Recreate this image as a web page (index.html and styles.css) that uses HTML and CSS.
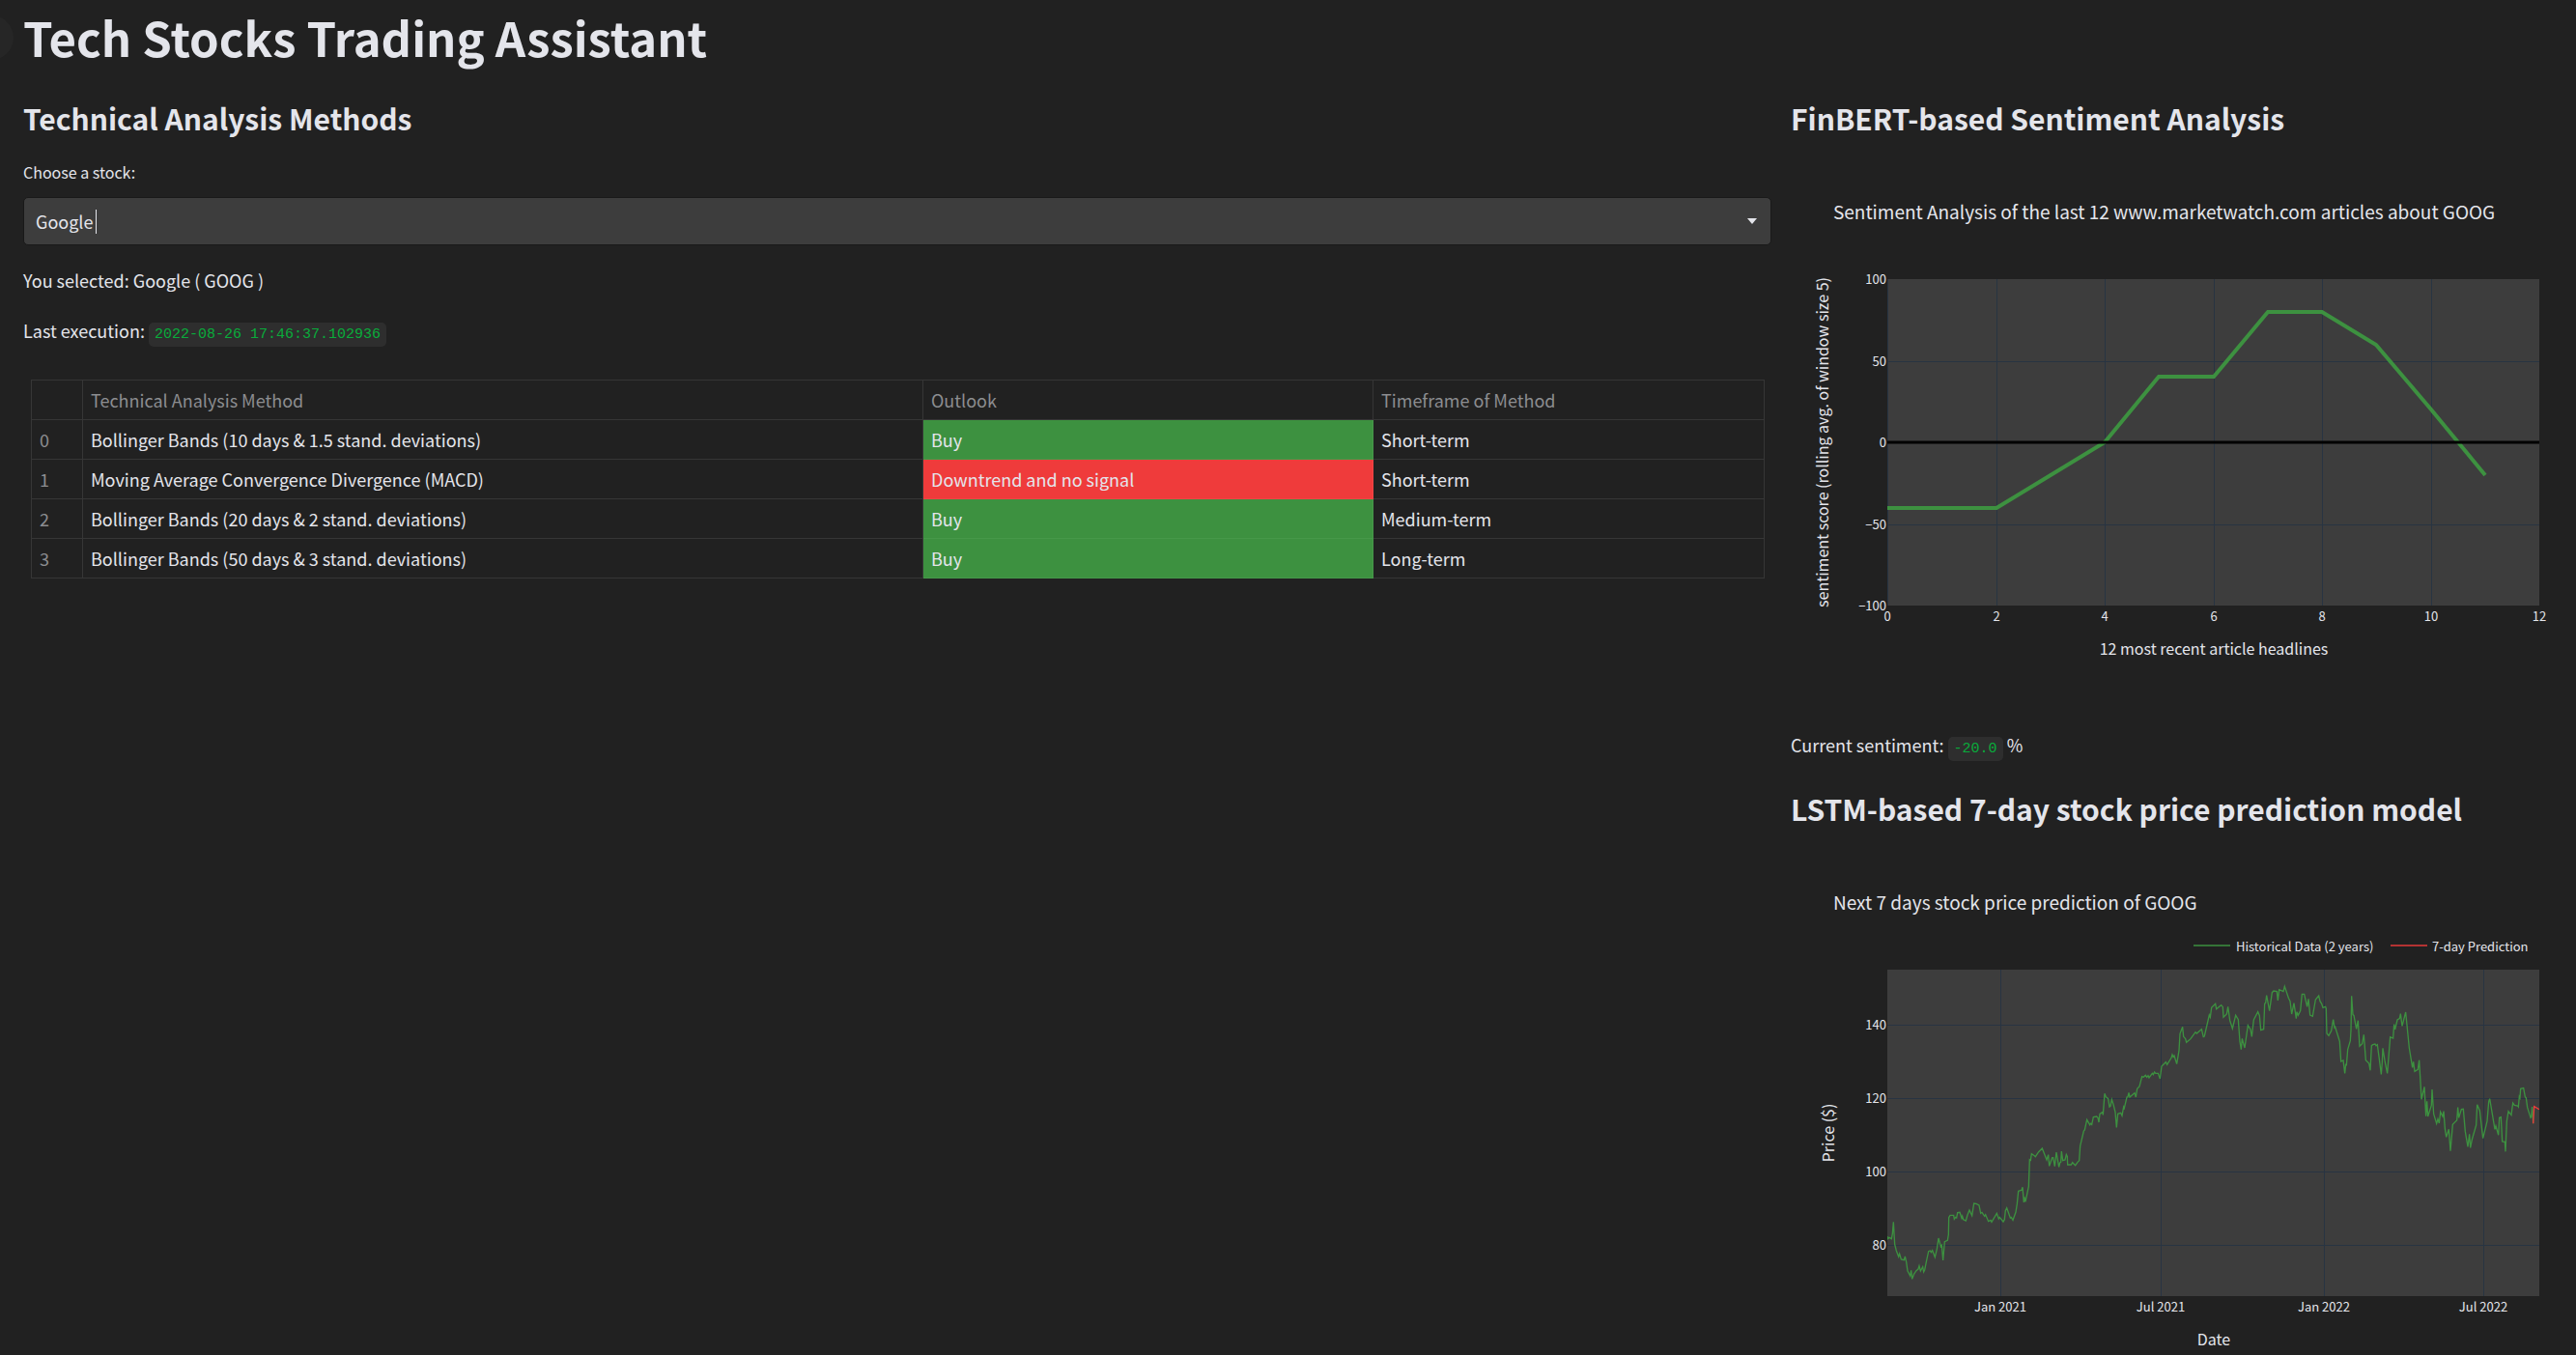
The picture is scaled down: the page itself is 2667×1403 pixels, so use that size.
FILE: index.html
```html
<!DOCTYPE html>
<html lang="en">
<head>
<meta charset="utf-8">
<meta name="viewport" content="width=device-width, initial-scale=1">
<title>Tech Stocks Trading Assistant</title>
<link rel="stylesheet" href="styles.css">
</head>
<body>
<button class="edge-handle" type="button" aria-label="Open sidebar"></button>
<main class="page">
  <h1>Tech Stocks Trading Assistant</h1>
  <div class="columns">
    <section class="methods">
      <h2>Technical Analysis Methods</h2>
      <label class="field-label" for="stock">Choose a stock:</label>
      <div class="select-wrap">
        <select id="stock" class="select">
          <option selected>Google</option>
          <option>Apple</option>
          <option>Microsoft</option>
          <option>Amazon</option>
        </select>
        <span class="caret"></span>
        <svg class="chevron" viewBox="0 0 10 6" aria-hidden="true"><path d="M0 0h10L5 6z"/></svg>
      </div>
      <p class="line">You selected: Google ( GOOG )</p>
      <p class="line">Last execution: <code>2022-08-26 17:46:37.102936</code></p>
      <table class="signals">
        <colgroup><col class="c-index"><col class="c-method"><col class="c-outlook"><col class="c-time"></colgroup>
        <thead>
          <tr><th></th><th>Technical Analysis Method</th><th>Outlook</th><th>Timeframe of Method</th></tr>
        </thead>
        <tbody>
          <tr><th>0</th><td>Bollinger Bands (10 days &amp; 1.5 stand. deviations)</td><td class="up">Buy</td><td>Short-term</td></tr>
          <tr><th>1</th><td>Moving Average Convergence Divergence (MACD)</td><td class="down">Downtrend and no signal</td><td>Short-term</td></tr>
          <tr><th>2</th><td>Bollinger Bands (20 days &amp; 2 stand. deviations)</td><td class="up">Buy</td><td>Medium-term</td></tr>
          <tr><th>3</th><td>Bollinger Bands (50 days &amp; 3 stand. deviations)</td><td class="up">Buy</td><td>Long-term</td></tr>
        </tbody>
      </table>
    </section>
    <section class="models">
      <h2>FinBERT-based Sentiment Analysis</h2>
      <svg class="chart" viewBox="0 0 789 563" role="img" aria-label="Sentiment score of the last 12 articles">
        <text class="chart-title" x="44" y="65">Sentiment Analysis of the last 12 www.marketwatch.com articles about GOOG</text>
        <rect class="plot" x="100" y="127" width="675" height="338"/>
        <path class="grid" d="M100 127v338M213 127v338M325 127v338M438 127v338M550 127v338M663 127v338M100 212h675M100 381h675"/>
        <polyline class="score" points="100,364 213,364 269,330 325,296 381,228 438,228 494,161 550,161 606,195 663,262 719,330"/>
        <path class="zero" d="M100 296h675"/>
        <g class="tick end"><text x="99" y="132">100</text><text x="99" y="217">50</text><text x="99" y="301">0</text><text x="99" y="386">−50</text><text x="99" y="470">−100</text></g>
        <g class="tick mid"><text x="100" y="481">0</text><text x="213" y="481">2</text><text x="325" y="481">4</text><text x="438" y="481">6</text><text x="550" y="481">8</text><text x="663" y="481">10</text><text x="775" y="481">12</text></g>
        <text class="axis mid" x="438" y="516">12 most recent article headlines</text>
        <text class="axis mid" transform="translate(39 296) rotate(-90)">sentiment score (rolling avg. of window size 5)</text>
      </svg>
      <p class="line sentiment">Current sentiment: <code>-20.0</code> %</p>
      <h2>LSTM-based 7-day stock price prediction model</h2>
      <svg class="chart" viewBox="0 0 789 526" role="img" aria-label="Stock price history and prediction">
        <text class="chart-title" x="44" y="65">Next 7 days stock price prediction of GOOG</text>
        <path class="key-past" d="M417 102h38"/><text class="tick" x="461" y="108">Historical Data (2 years)</text>
        <path class="key-next" d="M621 102h38"/><text class="tick" x="664" y="108">7-day Prediction</text>
        <rect class="plot" x="100" y="127" width="675" height="338"/>
        <path class="grid" d="M217 127v338M383 127v338M552 127v338M717 127v338M100 184h675M100 260h675M100 336h675M100 412h675"/>
        <svg x="100" y="127" width="675" height="337" viewBox="42 42 2025 1011">
          <polyline class="past" points="42,870 44,878 48,874 55,878 58,862 61,826 65,895 70,915 77,934 80,925 85,942 94,944 97,933 101,950 105,978 113,993 116,976 119,1003 125,987 132,977 138,972 141,962 145,978 152,965 155,981 158,975 163,950 170,917 175,915 178,920 182,914 190,935 196,910 201,876 208,902 211,898 215,945 220,887 229,883 232,865 233,812 237,805 248,805 250,817 254,811 257,813 260,797 267,796 273,814 275,808 278,818 286,822 291,804 297,789 305,806 311,768 318,769 327,774 332,799 336,796 344,808 347,803 356,824 363,820 366,826 382,799 388,816 391,811 402,825 406,818 409,790 413,782 424,813 427,811 432,820 441,795 445,770 449,730 459,727 462,718 466,765 468,748 471,763 481,715 484,632 487,634 490,614 499,620 502,623 512,608 523,597 537,633 542,617 545,652 554,626 557,626 562,653 567,609 575,655 578,642 581,640 583,606 587,635 594,633 598,616 601,622 602,648 613,648 617,641 626,650 633,640 638,635 641,590 652,543 655,540 662,508 671,524 674,520 677,523 682,500 692,498 696,502 699,516 702,490 710,485 712,493 717,427 721,437 728,443 732,468 735,466 739,445 744,460 750,485 754,532 758,490 767,487 771,496 776,468 778,472 786,438 789,437 792,424 795,438 810,425 814,438 818,412 825,405 833,374 838,376 844,370 848,376 852,371 855,378 865,364 868,368 872,360 875,364 883,364 889,381 894,342 907,329 911,337 924,316 927,306 930,313 933,309 941,335 948,293 951,241 959,220 962,250 968,257 971,268 984,257 999,236 1003,240 1018,227 1024,252"/>
          <g transform="translate(1020 0)">
            <polyline class="past" points="4,252 7,248 22,183 25,190 29,160 39,150 41,148 44,164 59,152 64,158 66,190 76,180 80,157 86,200 94,225 104,184 112,197 117,265 121,290 124,256 132,285 142,215 150,228 154,250 160,198 173,173 178,185 182,230 191,227 194,148 197,145 200,122 209,170 217,113 222,108 232,110 235,138 239,104 252,110 256,94 268,130 273,140 278,180 285,146 292,194 294,173 298,184 305,170 310,118 317,118 326,157 330,133 335,183 343,187 352,135 362,123 366,140 371,148 375,160 383,157 385,163 387,240 393,247 401,232 407,197 411,222 413,220 427,265 431,327 438,324 443,364 446,335 448,340 452,290 460,263 462,230 464,124 468,182 471,184 479,226 484,200 489,280 497,272 502,244 508,323 518,333 522,355 526,278 530,275 537,273 540,278 544,275 550,320 556,367 559,330 561,286 568,330 575,364 584,251 593,255 596,212 599,228 606,198 613,194 616,179 621,217 632,174 643,285 653,346 656,328 660,358 670,352 674,323 681,445 690,406 695,497 698,451 701,498 712,463 714,414 719,490 728,520 732,506 736,519 740,484 747,498 750,482 754,535 758,562 766,538 771,605 778,523 791,510 794,470 797,502 805,476 811,475 817,545 825,592 830,553 833,595 838,570 851,525 854,461 862,480 872,566 885,513 890,452 893,443 901,490 909,538 912,527 920,556 923,502 928,500 932,576 940,577 942,607 946,513 951,482 960,494 965,456 970,463 980,465 982,468 985,436 987,440 989,412 998,410 1003,437 1006,440 1010,470 1020,502 1022,500 1025,468 1028,520"/>
            <polyline class="next" points="1028,520 1031,467 1047,476"/>
          </g>
        </svg>
        <g class="tick end"><text x="99" y="189">140</text><text x="99" y="265">120</text><text x="99" y="341">100</text><text x="99" y="417">80</text></g>
        <g class="tick mid"><text x="217" y="481">Jan 2021</text><text x="383" y="481">Jul 2021</text><text x="552" y="481">Jan 2022</text><text x="717" y="481">Jul 2022</text></g>
        <text class="axis mid" x="438" y="516">Date</text>
        <text class="axis mid" transform="translate(45 296) rotate(-90)">Price ($)</text>
      </svg>
    </section>
  </div>
</main>
</body>
</html>
```
FILE: styles.css
```css
* { box-sizing: border-box; }
body {
  margin: 0;
  background: #212121;
  color: #e4e5eb;
  font-family: "Noto Sans CJK SC", "Noto Sans", sans-serif;
  font-size: 18px;
  line-height: 32px;
}
.page { padding: 0 24px; }
h1, h2, p { margin: 0; }
h1 { font-size: 49px; font-weight: 700; line-height: 66px; padding-top: 5px; }
h2 { font-size: 30px; font-weight: 600; line-height: 42px; }
.edge-handle {
  position: absolute;
  left: -32px;
  top: 16px;
  width: 46px;
  height: 46px;
  padding: 0;
  border: 0;
  border-radius: 50%;
  background: #262626;
}
.columns {
  display: grid;
  grid-template-columns: minmax(0, 1810fr) minmax(0, 789fr);
  gap: 20px;
  padding-top: 30px;
}
.field-label { display: block; margin-top: 23px; font-size: 16px; line-height: 24px; }
.select-wrap { position: relative; margin: 14px 0 20px; }
.select {
  display: block;
  width: 100%;
  height: 50px;
  padding: 0 12px;
  appearance: none;
  border: 1px solid #191919;
  border-radius: 5px;
  background: #3d3d3d;
  color: inherit;
  font: inherit;
}
.caret { position: absolute; left: 75px; top: 13px; width: 1px; height: 25px; background: #e4e5eb; }
.chevron { position: absolute; right: 15px; top: 22px; width: 10px; height: 6px; fill: #e4e5eb; }
.line + .line { margin-top: 20px; }
code {
  padding: 4px 6px;
  border-radius: 5px;
  background: #2e2e2e;
  color: #09ab3b;
  font-family: "Liberation Mono", monospace;
  font-size: 15px;
}
.signals {
  width: calc(100% - 15px);
  margin: 30px 7px 0 8px;
  border-collapse: collapse;
  table-layout: fixed;
  text-align: left;
}
.c-index { width: 53px; }
.c-outlook { width: 466px; }
.c-time { width: 405px; }
.signals th, .signals td { height: 41px; padding: 0 8px; border: 1px solid #363636; line-height: 32px; }
.signals th { font-weight: 400; color: #8c8d90; }
.signals .up { background: #3d9140; border-color: #469849; }
.signals .down { background: #ef3b3b; border-color: #f04545; }
.chart { display: block; width: 100%; height: auto; margin-top: 19px; }
.chart text { fill: #e4e5eb; }
.chart-title { font-size: 19px; }
.axis { font-size: 16px; }
.tick { font-size: 13px; }
.mid { text-anchor: middle; }
.end { text-anchor: end; }
.plot { fill: #3d3d3d; }
.grid, .zero, .score, .past, .next, .key-past, .key-next { fill: none; }
.grid { stroke: #283442; stroke-width: 1; shape-rendering: crispEdges; }
.zero { stroke: #000; stroke-width: 3; }
.score { stroke: #3d9140; stroke-width: 4; }
.past { stroke: #3d9140; stroke-width: 4; }
.next { stroke: #ef3b3b; stroke-width: 4; }
.key-past { stroke: #347437; stroke-width: 2; }
.key-next { stroke: #b43333; stroke-width: 2; }
.sentiment { margin: 30px 0 24px; }
```
